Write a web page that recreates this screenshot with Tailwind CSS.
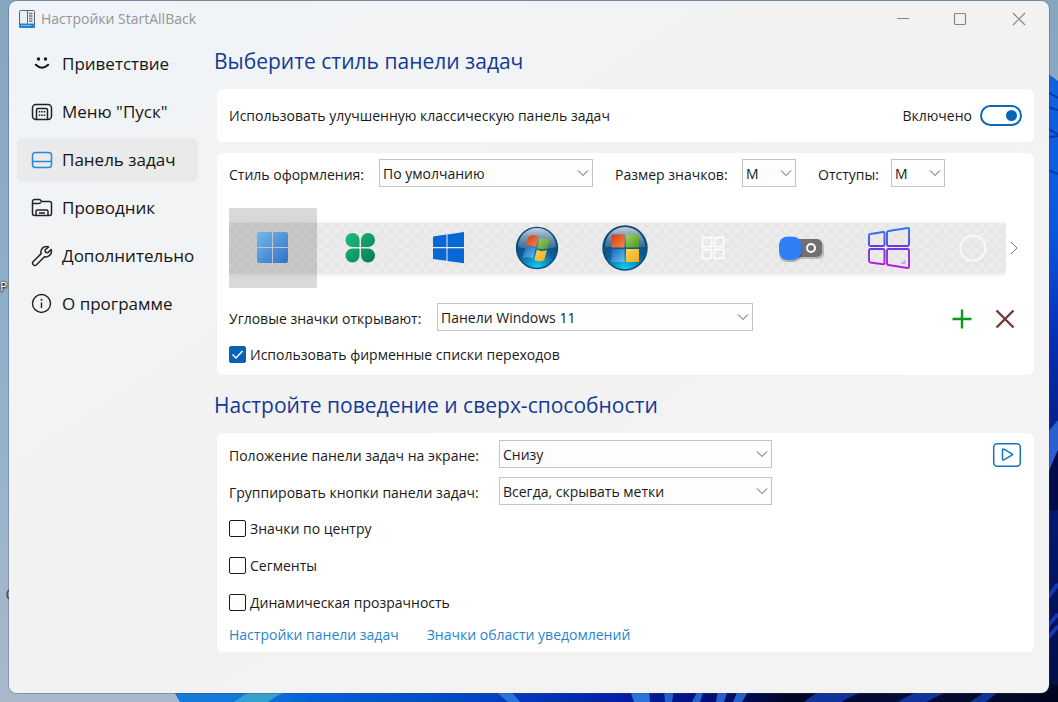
<!DOCTYPE html>
<html lang="ru">
<head>
<meta charset="utf-8">
<meta name="viewport" content="width=device-width, initial-scale=1">
<title>Настройки StartAllBack</title>
<script src="https://cdn.jsdelivr.net/npm/@tailwindcss/browser@4"></script>
</head>
<body class="relative flex min-h-screen flex-col bg-[#93afc7] px-[9px] pt-px pb-[9px] font-['Open_Sans','Noto_Sans',sans-serif] text-sm text-[#1a1a1a]">

<!-- Desktop wallpaper -->
<svg class="absolute inset-0 h-full w-full" viewBox="0 0 1058 702" preserveAspectRatio="none" aria-hidden="true">
  <defs>
    <linearGradient id="sky" x1="0" y1="0" x2="0" y2="1"><stop offset="0" stop-color="#86a5bf"/><stop offset=".5" stop-color="#8fb0cb"/><stop offset="1" stop-color="#a9b8ca"/></linearGradient>
    <linearGradient id="right" x1="0" y1="0" x2="0" y2="1"><stop offset="0" stop-color="#0f62e0"/><stop offset=".25" stop-color="#0a5ae0"/><stop offset=".42" stop-color="#0630b8"/><stop offset=".6" stop-color="#041c80"/><stop offset="1" stop-color="#020d45"/></linearGradient>
    <linearGradient id="bottom" x1="0" y1="0" x2="1" y2="0"><stop offset="0" stop-color="#157bd8"/><stop offset=".08" stop-color="#1478d8"/><stop offset=".16" stop-color="#0560d8"/><stop offset=".35" stop-color="#0644c0"/><stop offset=".5" stop-color="#0420a8"/><stop offset=".6" stop-color="#02107c"/><stop offset=".7" stop-color="#020624"/><stop offset=".82" stop-color="#040c38"/><stop offset="1" stop-color="#01061e"/></linearGradient>
  </defs>
  <rect width="1058" height="702" fill="url(#sky)"/>
  <path d="M1040 68l18 13v621h-18z" fill="url(#right)"/>
  <path d="M1044 90l14 8M1044 106l14 4M1044 127l14 7M1044 138l14-2M1044 168l14 6" stroke="#0438a8" stroke-width="2" fill="none"/>
  <path d="M1046 434l12-14v30l-12 28z" fill="#2a5fd0"/>
  <path d="M1046 478l12-28v60h-12z" fill="#020a4a"/>
  <path d="M1046 600l12-16M1046 628l12-14M1046 640l12-14" stroke="#1238b4" stroke-width="4" fill="none"/>
  <path d="M170 685h888v17H180z" fill="url(#bottom)"/>
  <path d="M234 702q8-6 18-12h40q-14 4-24 12z" fill="#369fce"/>
  <path d="M494 690l14 12h12l-10-12zM630 690l4 12h16l-1-12z" fill="#2c74d8"/>
  <path d="M664 690l1 12h7l2-12zM698 690l-6 12h8l4-12zM718 690l-2 12h8l4-12zM738 690l-5 12h9l7-12z" fill="#2560cc"/>
  <path d="M804 702q10-8 18-12h46q-18 6-26 12zM898 702q14-10 30-12h22l-24 12zM970 702l18-12h12l-14 12z" fill="#10349a"/>
  <path d="M11 590q-4 0-4 4.500t4 4.500" fill="none" stroke="#40505f" stroke-width="1.500"/>
</svg>
<span class="absolute top-[279px] left-0 text-xs text-white [text-shadow:0_0_2px_#000,0_1px_2px_#000]">Р</span>

<div class="relative flex flex-1 flex-col rounded-lg bg-linear-to-br from-[#f0f4f8] via-[#f2f2f2] via-40% to-[#f3f3f3] shadow-[0_0_0_1px_rgba(60,70,90,0.3)]">

  <header class="flex h-9 items-center pl-2">
    <svg class="size-5" viewBox="0 0 20 20" fill="none" aria-hidden="true">
      <rect x="2.500" y="1.500" width="15" height="15" rx="1" fill="#eceff1" stroke="#5d656c"/>
      <path d="M10.500 1.500v13" stroke="#5d656c"/>
      <path d="M12 4.500h3.500M12 7h3.500M12 9.500h3.500M12 12h3.500" stroke="#6f777e" stroke-width="1.300"/>
      <path d="M2 14.500h16v3.500a1 1 0 0 1-1 1H3a1 1 0 0 1-1-1z" fill="#1e83dc"/>
      <path d="M4 16.500h10" stroke="#7dbcf2"/>
    </svg>
    <h1 class="ml-1 text-sm text-[#929599]">Настройки StartAllBack</h1>
    <div class="ml-auto flex pr-px">
      <button type="button" aria-label="Свернуть" class="flex h-9 w-[58px] items-center justify-center"><svg class="size-4" viewBox="0 0 16 16" fill="none" stroke="#858585"><path d="M2 7.500h12"/></svg></button>
      <button type="button" aria-label="Развернуть" class="flex h-9 w-[58px] items-center justify-center"><svg class="size-4" viewBox="0 0 16 16" fill="none" stroke="#858585" stroke-width="1.200"><rect x="1.500" y="2.500" width="11" height="11" rx="1"/></svg></button>
      <button type="button" aria-label="Закрыть" class="flex h-9 w-[58px] items-center justify-center"><svg class="size-4" viewBox="0 0 16 16" fill="none" stroke="#858585" stroke-width="1.200"><path d="M2 2l12 12M14 2L2 14"/></svg></button>
    </div>
  </header>

  <div class="flex flex-1">
    <nav class="flex w-[189px] shrink-0 flex-col gap-1 pt-[5px] pl-2 text-[17px] text-[#161616]">
      <a href="#welcome" class="flex h-11 items-center gap-[9px] rounded-md pl-3.5">
        <svg class="size-[22px] shrink-0" viewBox="0 0 22 22" fill="none" stroke="#161616" stroke-width="2" stroke-linecap="round" aria-hidden="true"><circle cx="7.500" cy="6" r="1.700" fill="#161616" stroke="none"/><circle cx="14.500" cy="6" r="1.700" fill="#161616" stroke="none"/><path d="M4.800 11.800q6.200 5.800 12.400 0"/></svg>
        Приветствие</a>
      <a href="#start" class="flex h-11 items-center gap-[9px] rounded-md pl-3.5">
        <svg class="size-[22px] shrink-0" viewBox="0 0 22 22" fill="none" stroke="#222" stroke-width="1.500" aria-hidden="true"><rect x="1.500" y="3.500" width="19" height="15" rx="3.500"/><path d="M5.500 18V9A1.500 1.500 0 0 1 7 7.500h8A1.500 1.500 0 0 1 16.500 9v9"/><path d="M7.700 10.800h1.600M10.200 10.800h1.600M12.700 10.800h1.600M7.700 14.200h1.600M10.200 14.200h1.600M12.700 14.200h1.600" stroke-width="1.600"/></svg>
        Меню "Пуск"</a>
      <a href="#taskbar" aria-current="page" class="flex h-11 items-center gap-[9px] rounded-md bg-[#eaeaea] pl-3.5">
        <svg class="size-[22px] shrink-0" viewBox="0 0 22 22" fill="none" stroke="#2488dc" stroke-width="1.500" aria-hidden="true"><rect x="1.500" y="3.500" width="19" height="15" rx="3"/><path d="M1.500 12.500h19"/></svg>
        Панель задач</a>
      <a href="#explorer" class="flex h-11 items-center gap-[9px] rounded-md pl-3.5">
        <svg class="size-[22px] shrink-0" viewBox="0 0 22 22" fill="none" stroke="#222" stroke-width="1.500" stroke-linejoin="round" aria-hidden="true"><path d="M1.500 16.500V4.500a2 2 0 0 1 2-2h4.700a1.600 1.600 0 0 1 1.300.7l1 1.300h8a2 2 0 0 1 2 2v10a2 2 0 0 1-2 2h-15a2 2 0 0 1-2-2zM1.500 6.500h6.500q1.300 0 1.700-1.200M5 18.500v-4a1.500 1.500 0 0 1 1.500-1.500h9a1.500 1.500 0 0 1 1.500 1.500v4M8 16h6"/></svg>
        Проводник</a>
      <a href="#advanced" class="flex h-11 items-center gap-[9px] rounded-md pl-3.5">
        <svg class="size-[22px] shrink-0" viewBox="0 0 22 22" fill="none" stroke="#222" stroke-width="1.500" stroke-linejoin="round" aria-hidden="true"><path d="M17.600 1.900a5.500 5.500 0 0 0-7.400 6.700l-7.900 7.900a2.200 2.200 0 0 0 3.200 3.200l8-8a5.500 5.500 0 0 0 6.600-7.200l-3.300 3.200-2.300-.5-.5-2.200z"/></svg>
        Дополнительно</a>
      <a href="#about" class="flex h-11 items-center gap-[9px] rounded-md pl-3.5">
        <svg class="size-[22px] shrink-0" viewBox="0 0 22 22" fill="none" stroke="#222" stroke-width="1.400" aria-hidden="true"><circle cx="10.500" cy="10.500" r="9"/><path d="M10.500 9.500v5.500"/><circle cx="10.500" cy="6.800" r="1" fill="#222" stroke="none"/></svg>
        О программе</a>
    </nav>

    <main class="flex min-w-0 flex-1 flex-col pr-[15px] pl-[19px]">
      <h2 class="-ml-[3px] pt-2 text-[21px] leading-8 text-[#133a94]">Выберите стиль панели задач</h2>

      <section class="mt-3 flex h-[53px] items-center rounded-md bg-white px-3">
        <label for="classic">Использовать улучшенную классическую панель задач</label>
        <span class="ml-auto">Включено</span>
        <input id="classic" type="checkbox" role="switch" checked class="ml-2 flex h-[21px] w-[42px] appearance-none items-center justify-end rounded-full border-2 border-[#0f68b6] bg-white pr-[3px] before:size-[11px] before:rounded-full before:bg-[#0565b8]">
      </section>

      <section class="mt-[11px] rounded-md bg-white px-3 pt-1.5 pb-3">
        <div class="flex items-center">
          <label for="skin" class="w-[150px] pt-1">Стиль оформления:</label>
          <div class="relative w-[214px]">
            <select id="skin" class="h-7 w-full appearance-none border border-[#c4c4c4] bg-[#fdfdfd] px-[3px] pt-px"><option>По умолчанию</option></select>
            <svg class="pointer-events-none absolute top-2 right-1 size-3" viewBox="0 0 12 12" fill="none" stroke="#555"><path d="M1 3.500l5 5 5-5"/></svg>
          </div>
          <label for="size" class="ml-[22px] w-[127px] pt-1">Размер значков:</label>
          <div class="relative w-[54px]">
            <select id="size" class="h-7 w-full appearance-none border border-[#c4c4c4] bg-[#fdfdfd] px-[3px] pt-px"><option>M</option></select>
            <svg class="pointer-events-none absolute top-2 right-1 size-3" viewBox="0 0 12 12" fill="none" stroke="#555"><path d="M1 3.500l5 5 5-5"/></svg>
          </div>
          <label for="margins" class="ml-[22px] w-[73px] pt-1">Отступы:</label>
          <div class="relative w-[54px]">
            <select id="margins" class="h-7 w-full appearance-none border border-[#c4c4c4] bg-[#fdfdfd] px-[3px] pt-px"><option>M</option></select>
            <svg class="pointer-events-none absolute top-2 right-1 size-3" viewBox="0 0 12 12" fill="none" stroke="#555"><path d="M1 3.500l5 5 5-5"/></svg>
          </div>
        </div>

        <div class="mt-[21px] flex h-20 items-center">
          <div class="relative flex h-20 min-w-0 flex-1 items-center overflow-hidden">
            <div class="absolute inset-x-0 top-[15px] h-[50px] bg-[repeating-conic-gradient(#e6e6e6_0_25%,#ececec_0_50%)] bg-size-[10px_10px] shadow-[0_1px_5px_#e2e2e2]"></div>
            <button type="button" aria-label="Windows 11" aria-pressed="true" class="relative flex h-20 w-[88px] shrink-0 items-center justify-center rounded-xs bg-black/15">
              <svg class="size-8" viewBox="0 0 32 32"><defs><linearGradient id="w11" x1="0" y1="0" x2="1" y2="1" gradientUnits="objectBoundingBox"><stop offset="0" stop-color="#72b9ec"/><stop offset="1" stop-color="#2f72c8"/></linearGradient></defs><path d="M2 0h13v15H0V2a2 2 0 0 1 2-2zM16 0h13a2 2 0 0 1 2 2v13H16zM0 16h15v15H2a2 2 0 0 1-2-2zM16 16h15v13a2 2 0 0 1-2 2H16z" fill="url(#w11)"/></svg>
            </button>
            <button type="button" aria-label="Клевер" class="relative flex h-20 w-[88px] shrink-0 items-center justify-center">
              <svg class="size-8" viewBox="0 0 32 32"><defs><linearGradient id="clv" x1="0" y1="0" x2="1" y2="1"><stop offset="0" stop-color="#1cc07c"/><stop offset="1" stop-color="#067a50"/></linearGradient></defs><path d="M14.500 15H7.500A7 7 0 1 1 14.500 8zM16 15V8A7 7 0 1 1 23 15zM14.500 16.500v7A7 7 0 1 1 7.500 16.500zM16 16.500h7A7 7 0 1 1 16 23.500z" fill="url(#clv)"/></svg>
            </button>
            <button type="button" aria-label="Windows 10" class="relative flex h-20 w-[88px] shrink-0 items-center justify-center">
              <svg class="size-8" viewBox="0 0 32 32"><path d="M0 4.500L13.500 2.600V15H0zM14.500 2.400L31 0v15H14.500zM0 16.200h13.500v12.600L0 27zM14.500 16.200H31V31.300l-16.500-2.300z" fill="#0668d4"/></svg>
            </button>
            <button type="button" aria-label="Windows 7" class="relative flex h-20 w-[88px] shrink-0 items-center justify-center">
              <svg class="size-11" viewBox="0 0 44 44"><defs>
                <radialGradient id="orb" cx=".5" cy="1" r="1"><stop offset="0" stop-color="#16d8f4"/><stop offset=".22" stop-color="#0e9ed0"/><stop offset=".5" stop-color="#0c5c94"/><stop offset="1" stop-color="#16406e"/></radialGradient>
                <linearGradient id="gloss" x1="0" y1="0" x2="0" y2="1"><stop offset="0" stop-color="#e6eef5" stop-opacity=".85"/><stop offset="1" stop-color="#6f8eae" stop-opacity=".4"/></linearGradient>
                <linearGradient id="red" x1="0" y1="0" x2="1" y2="1"><stop offset="0" stop-color="#d8371c"/><stop offset="1" stop-color="#f58a44"/></linearGradient>
                <linearGradient id="grn" x1="0" y1="0" x2="1" y2="1"><stop offset="0" stop-color="#a6cf5a"/><stop offset="1" stop-color="#439a2c"/></linearGradient>
                <linearGradient id="blu" x1="0" y1="0" x2="1" y2="1"><stop offset="0" stop-color="#1668b6"/><stop offset="1" stop-color="#6ac0ee"/></linearGradient>
                <linearGradient id="yel" x1="0" y1="0" x2="1" y2="1"><stop offset="0" stop-color="#fbd554"/><stop offset="1" stop-color="#f3a81c"/></linearGradient></defs>
                <circle cx="22" cy="22" r="20.500" fill="url(#orb)" stroke="#0c4878" stroke-width="1.300"/>
                <path d="M3 21a19 19 0 0 1 38 0q-19 5-38 0z" fill="url(#gloss)"/>
                <path d="M13.500 10.500q5-3 10 0l-2.500 10.600q-5-3-10.300-.6z" fill="url(#red)"/>
                <path d="M24.800 11.500q4.700 2.800 10.200.5l-2.700 10.300q-5.200 2.300-10-.4z" fill="url(#grn)"/>
                <path d="M10.300 21.900q5.300-2.600 10.300.4L18 32.500q-4.700-2.800-10.200-.6z" fill="url(#blu)"/>
                <path d="M21.900 23.400q4.800 2.800 10 .5l-2.600 10.300q-5.200 2.300-10-.5z" fill="url(#yel)"/>
              </svg>
            </button>
            <button type="button" aria-label="Шар с квадратным логотипом" class="relative flex h-20 w-[88px] shrink-0 items-center justify-center">
              <svg class="size-[46px]" viewBox="0 0 46 46"><circle cx="23" cy="23" r="22" fill="url(#orb)" stroke="#0c4878" stroke-width="1.400"/><path d="M3 22a20 20 0 0 1 40 0z" fill="url(#gloss)"/><path d="M9.500 9.500h13v13h-13z" fill="url(#red)"/><path d="M24 9.500h13v13H24z" fill="url(#grn)"/><path d="M9.500 24h13v13h-13z" fill="url(#blu)"/><path d="M24 24h13v13H24z" fill="url(#yel)"/></svg>
            </button>
            <button type="button" aria-label="Контурная сетка" class="relative flex h-20 w-[88px] shrink-0 items-center justify-center">
              <svg class="size-6" viewBox="0 0 24 24" fill="none" stroke="#fff" stroke-width="1.500"><path d="M1.500 1.500h9v9h-9zM13.500 1.500h9v9h-9zM1.500 13.500h9v9h-9zM13.500 13.500h9v9h-9z"/></svg>
            </button>
            <button type="button" aria-label="Переключатель" class="relative flex h-20 w-[88px] shrink-0 items-center justify-center">
              <svg class="h-8 w-[50px]" viewBox="0 0 50 32"><rect x="20" y="9" width="28" height="18" rx="5" fill="#000" opacity=".2"/><rect x="18" y="7" width="28" height="18" rx="5" fill="#6f7072"/><path d="M14 6c8 0 12 2 12 12s-4 12-12 12S3 28 3 18 6 6 14 6z" fill="#000" opacity=".25"/><path d="M14 4.500c8.500 0 11.500 3 11.500 11.500S22.500 28 14 28 3 24.500 3 16 5.500 4.500 14 4.500z" fill="#317ff6"/><circle cx="35" cy="16" r="4" fill="none" stroke="#fff" stroke-width="2"/></svg>
            </button>
            <button type="button" aria-label="Градиентный контур" class="relative flex h-20 w-[88px] shrink-0 items-center justify-center">
              <svg class="size-[42px]" viewBox="0 0 42 42" fill="none" stroke-width="1.900" stroke-linejoin="round"><defs><linearGradient id="neon" gradientUnits="userSpaceOnUse" x1="0" y1="0" x2="0" y2="42"><stop offset="0" stop-color="#2a7af0"/><stop offset=".45" stop-color="#6340dc"/><stop offset="1" stop-color="#c018e0"/></linearGradient></defs><path d="M2.500 7q-1.500.2-1.500 1.500v9q0 1.500 1.500 1.500H15q1.500 0 1.500-1.500V6q0-1.200-1.500-1zM20.500 4q-1.500.2-1.500 1.500v12q0 1.500 1.500 1.500H39.500q1.500 0 1.500-1.500V2q0-1.300-1.500-1zM2.500 22Q1 22 1 23.500V34q0 1.200 1.500 1.500L15 37.200q1.500.2 1.500-1.300V23.500Q16.500 22 15 22zM20.500 22q-1.500 0-1.500 1.500v13q0 1.300 1.500 1.500l19 3q1.500.2 1.500-1.300V23.500q0-1.500-1.500-1.500z" stroke="url(#neon)"/><path d="M32.500 37l5-4.500V37z" fill="#a9b4ee"/></svg>
            </button>
            <button type="button" aria-label="Кольцо" class="relative flex h-20 w-[88px] shrink-0 items-center justify-center pr-2">
              <svg class="size-7" viewBox="0 0 28 28" fill="none" stroke="#fafafa" stroke-width="1.800"><circle cx="14" cy="14" r="12.500"/></svg>
            </button>
          </div>
          <button type="button" aria-label="Далее" class="flex h-20 w-4 shrink-0 items-center justify-center">
            <svg class="h-3.5 w-2" viewBox="0 0 8 14" fill="none" stroke="#7c7c7c"><path d="M1 1l6 6-6 6"/></svg>
          </button>
        </div>

        <div class="mt-[15px] flex items-center">
          <label for="corner" class="w-52 pt-1">Угловые значки открывают:</label>
          <div class="relative w-[316px]">
            <select id="corner" class="h-7 w-full appearance-none border border-[#c4c4c4] bg-[#fdfdfd] px-[3px] pt-px"><option>Панели Windows 11</option></select>
            <svg class="pointer-events-none absolute top-2 right-1 size-3" viewBox="0 0 12 12" fill="none" stroke="#555"><path d="M1 3.500l5 5 5-5"/></svg>
          </div>
          <button type="button" aria-label="Добавить" class="mt-1 ml-auto"><svg class="size-5" viewBox="0 0 20 20" fill="none" stroke="#0c9a16" stroke-width="2.400"><path d="M10 .500v19M.500 10h19"/></svg></button>
          <button type="button" aria-label="Удалить" class="mt-1 mr-[7px] ml-[23px]"><svg class="size-5" viewBox="0 0 20 20" fill="none" stroke="#723a38" stroke-width="2.400"><path d="M1.500 1.500l17 17M18.500 1.500l-17 17"/></svg></button>
        </div>

        <div class="mt-[15px] flex h-[17px] items-center gap-1">
          <div class="relative size-[17px]">
            <input id="jump" type="checkbox" checked class="block size-[17px] appearance-none rounded-xs border border-[#1a1a1a] bg-white checked:border-[#0763b5] checked:bg-[#0763b5]">
            <svg class="pointer-events-none absolute inset-0 size-[17px]" viewBox="0 0 17 17" fill="none" stroke="#fff" stroke-width="1.500"><path d="M3.500 8.500L7 12l6.500-7"/></svg>
          </div>
          <label for="jump" class="pt-px">Использовать фирменные списки переходов</label>
        </div>
      </section>

      <h2 class="-ml-[3px] pt-3.5 text-[21px] leading-8 text-[#133a94]">Настройте поведение и сверх-способности</h2>

      <section class="mt-3 rounded-md bg-white px-3 pt-[7px] pb-[7px]">
        <div class="flex items-center">
          <label for="place" class="w-[270px] pt-1">Положение панели задач на экране:</label>
          <div class="relative w-[273px]">
            <select id="place" class="h-7 w-full appearance-none border border-[#c4c4c4] bg-[#fdfdfd] px-[3px] pt-px"><option>Снизу</option></select>
            <svg class="pointer-events-none absolute top-2 right-1 size-3" viewBox="0 0 12 12" fill="none" stroke="#555"><path d="M1 3.500l5 5 5-5"/></svg>
          </div>
          <button type="button" aria-label="Показать видео" class="mt-0.5 ml-auto"><svg class="h-[26px] w-[30px]" viewBox="0 0 30 26" fill="none" stroke="#1473c2" stroke-width="1.500" stroke-linejoin="round"><rect x="1.700" y="1.700" width="26.600" height="22.600" rx="3.500"/><path d="M10.500 8q0-1.500 1.400-.8l8 4.600q1.200.7 0 1.400l-8 4.600q-1.400.7-1.400-.8z"/></svg></button>
        </div>
        <div class="mt-[9px] flex items-center">
          <label for="group" class="w-[270px] pt-1">Группировать кнопки панели задач:</label>
          <div class="relative w-[273px]">
            <select id="group" class="h-7 w-full appearance-none border border-[#c4c4c4] bg-[#fdfdfd] px-[3px] pt-px"><option>Всегда, скрывать метки</option></select>
            <svg class="pointer-events-none absolute top-2 right-1 size-3" viewBox="0 0 12 12" fill="none" stroke="#555"><path d="M1 3.500l5 5 5-5"/></svg>
          </div>
        </div>
        <div class="mt-[15px] flex flex-col gap-5">
          <div class="flex h-[17px] items-center gap-1"><input id="center" type="checkbox" class="size-[17px] appearance-none rounded-xs border border-[#1a1a1a] bg-white"><label for="center">Значки по центру</label></div>
          <div class="flex h-[17px] items-center gap-1"><input id="segments" type="checkbox" class="size-[17px] appearance-none rounded-xs border border-[#1a1a1a] bg-white"><label for="segments">Сегменты</label></div>
          <div class="flex h-[17px] items-center gap-1"><input id="dynamic" type="checkbox" class="size-[17px] appearance-none rounded-xs border border-[#1a1a1a] bg-white"><label for="dynamic">Динамическая прозрачность</label></div>
        </div>
        <div class="mt-3.5 flex gap-7 text-[#1f86cd]">
          <a href="#taskbar-settings">Настройки панели задач</a>
          <a href="#tray-icons">Значки области уведомлений</a>
        </div>
      </section>
    </main>
  </div>
</div>
</body>
</html>
